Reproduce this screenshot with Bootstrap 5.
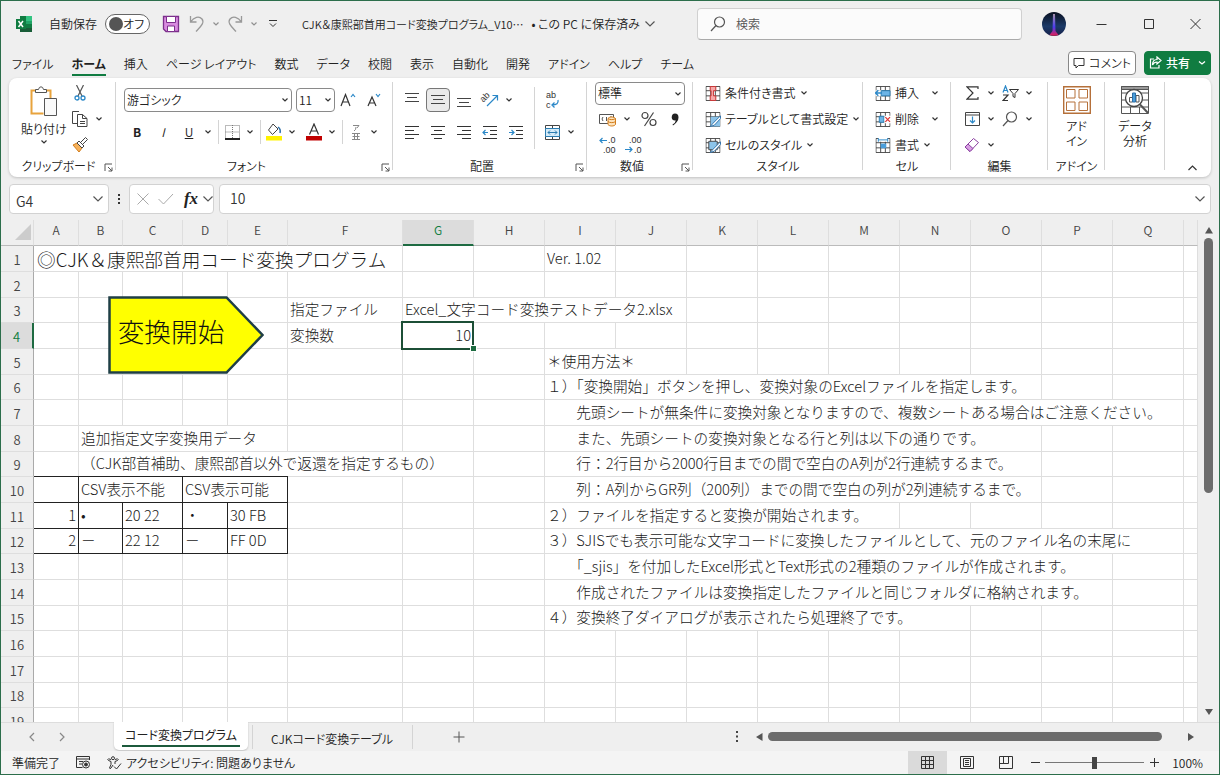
<!DOCTYPE html>
<html lang="ja">
<head>
<meta charset="utf-8">
<meta name="viewport" content="width=device-width, initial-scale=1">
<title>CJK＆康熙部首用コード変換プログラム</title>
<link href="https://cdn.jsdelivr.net/npm/bootstrap@5.3.0/dist/css/bootstrap.min.css" rel="stylesheet">
<style>
:root { --xl: #107c41; --edge: #2c6e4b; --ln: #dedede; --bar: #efefef; }
body { font-family: "Noto Sans CJK JP", sans-serif; font-size: 12px; font-weight: 350; line-height: 16px; color: #222; background: var(--bar); }
.ui { font-feature-settings: "palt"; }
.win { height: 100vh; border: 1px solid var(--edge); overflow: hidden; }
button, select, input { font: inherit; color: inherit; font-feature-settings: inherit; }
.flat { border: 0; background: none; padding: 0; display: inline-flex; align-items: center; justify-content: center; flex: none; }
svg { flex: none; display: block; }
svg text { font-family: "Liberation Sans", sans-serif; font-size: 9px; fill: #333; }
.cv { width: 12px; height: 24px; } .cv-w { width: 20px; }
.ib { width: 26px; height: 24px; } .ib-s { width: 16px; } .ib-m { width: 20px; } .ib-l { width: 32px; }
.titlebar { height: 47px; padding-left: 14px; }
.doctitle { font-size: 11px; margin-left: 16px; }
.toggle { width: 45px; height: 20px; border: 1px solid #666; border-radius: 10px; background: #fff; padding: 0 5px 0 3px; white-space: nowrap; }
.knob { width: 14px; height: 14px; border-radius: 50%; background: #555; flex: none; }
.searchbox { width: 325px; height: 32px; background: #fbfbfb; border: 1px solid #d0d0d0; border-bottom-color: #aaa; border-radius: 4px; padding-left: 12px; }
.searchbox input { border: 0; background: none; outline: 0; width: 240px; }
.searchbox input::placeholder { color: #555; opacity: 1; }
.tabs { height: 32px; padding-left: 11px; }
.tabs a { color: #222; text-decoration: none; height: 25px; padding-top: 5px; white-space: nowrap; margin-right: 18px; }
.tabs a.on { font-weight: 700; border-bottom: 2px solid var(--xl); }
.pill { height: 24px; border: 1px solid #888; border-radius: 4px; background: #fff; gap: 4px; }
.pill.share { background: var(--xl); border-color: var(--xl); color: #fff; font-weight: 500; }
.ribbon { margin: 0 8px; height: 99px; background: #fff; border-radius: 8px; box-shadow: 0 1px 3px #0003; }
.grp { position: relative; height: 99px; flex: none; }
.grp::after { content: ""; position: absolute; right: 0; top: 4px; bottom: 7px; width: 1px; background: #d4d4d4; }
.grp-body { height: 80px; }
.grp-name { height: 16px; line-height: 16px; text-align: center; }
.launch { position: absolute; right: 3px; bottom: 5px; }
.g-clip { width: 107px; } .g-font { width: 277px; } .g-align { width: 194px; } .g-num { width: 106px; }
.g-style { width: 170px; } .g-cell { width: 88px; } .g-edit { width: 97px; } .g-add { width: 57px; } .g-data { width: 60px; }
.two { padding-top: 10px; display: flex; flex-direction: column; gap: 8px; }
.three { padding-top: 2px; }
.three > div { height: 26px; display: flex; align-items: center; }
.bigbtn { flex-direction: column; line-height: 15px; }
.pad6 { padding-left: 6px; }
.sep { width: 1px; height: 24px; background: #d4d4d4; margin: 0 5px 0 6px; }
.vsep { width: 1px; height: 62px; background: #d4d4d4; margin: 9px 4px 0 5px; }
.combo { height: 24px; border: 1px solid #8a8a8a; border-radius: 4px; background: #fff; padding: 0 2px; appearance: none; }
.combo-wrap { position: relative; }
.combo-wrap svg { position: absolute; right: 3px; top: 9px; pointer-events: none; }
.c-font { width: 168px; } .c-size { width: 39px; } .c-num { width: 90px; height: 23px; }
.boxed { border: 1px solid #777; border-radius: 4px; background: #eaeaea; width: 24px; margin: 0 1px; }
.cmd { gap: 4px; white-space: nowrap; }
.fbar { padding: 7px 8px 6px; gap: 5px; }
.fbox { height: 30px; background: #fff; border: 1px solid #d2d2d2; border-radius: 4px; }
.fbox input, .fbox.fx { font-size: 14px; }
.fbox input { border: 0; outline: 0; background: none; min-width: 0; color: #333; }
.c-name { width: 100px; } .c-fx { width: 85px; }
.fxi { font: italic bold 17px "Liberation Serif", serif; color: #222; width: 22px; }
.sheet { flex: 1 1 0; min-height: 0; overflow: hidden; position: relative; }
.grid { table-layout: fixed; width: 100%; border-collapse: separate; border-spacing: 0; background: #fff; font-size: 11pt; line-height: 20px; color: #1a1a1a; font-weight: 300; font-feature-settings: normal; }
.grid td, .grid th { height: 26px; padding: 0 2px; border: 0 solid var(--ln); border-width: 0 1px 1px 0; white-space: pre; vertical-align: middle; overflow: hidden; }
.grid tbody tr:nth-child(3n) > * { height: 25px; }
.grid td { padding-bottom: 2px; }
.grid th { background: var(--bar); font-weight: 350; font-size: 13px; line-height: 16px; color: #444; text-align: center; padding: 0; }
.grid thead th { height: 26px; font-size: 12px; padding-bottom: 5px; border-bottom-color: #bbb; }
.grid tbody th { border-right-color: #aaa; padding-top: 2px; }
.grid th.sel { background: #dcdcdc; color: var(--xl); }
.grid thead th.sel { border-bottom: 2px solid #1e6b42; padding-bottom: 4px; }
.grid tbody th.sel { border-right: 2px solid #1e6b42; }
.grid td.bd { border-color: #222; }
.grid td.bdtop { box-shadow: 0 -1px #222; overflow: visible; }
.grid td.big { font-size: 14pt; line-height: 24px; padding: 0 3px; }
.grid td.num { text-align: right; }
.grid td.cur { position: relative; overflow: visible; }
.cur::before { content: ""; position: absolute; inset: -2px -1px -2px -2px; border: 2px solid #1c4f36; }
.cur::after { content: ""; position: absolute; right: -3px; bottom: -3px; width: 5px; height: 5px; background: #1c6b40; outline: 1px solid #fff; }
.corner { width: 0; height: 0; border: 8px solid transparent; border-right-color: #ccc; border-bottom-color: #ccc; margin: 3px 0 0 14px; }
.startbtn { position: absolute; left: 106px; top: 75px; width: 158px; height: 79px; }
.startbtn svg { position: absolute; inset: 0; }
.startbtn span { position: relative; font-size: 20pt; line-height: 32px; font-weight: 300; color: #111; padding-right: 30px; padding-bottom: 7px; }
.vscroll { width: 21px; padding: 6px 0; }
.vscroll .thumb { width: 9px; flex: 256 0 0; border-radius: 5px; background: #6c6c6c; margin-top: 4px; }
.rest-v { flex: 216 0 0; }
.sheettabs { height: 30px; border-top: 1px solid #ddd; padding-left: 25px; }
.sheettabs .tabon { background: #fff; border-radius: 0 0 5px 5px; height: 28px; width: 134px; box-shadow: 0 1px 2px #0003; margin-top: -2px; }
.tabon span { border-bottom: 2px solid #1c5a3c; padding: 0 3px; line-height: 21px; font-weight: 400; }
.taboff { width: 148px; padding-top: 4px; }
.addtab { margin-left: 35px; }
.hscroll { width: 440px; }
.hscroll .thumb { height: 9px; flex: 394 0 0; border-radius: 5px; background: #6c6c6c; margin: 0 0 0 5px; }
.rest-h { flex: 25 0 0; }
.status { height: 23px; background: #f4f4f4; padding-left: 11px; }
.vw { width: 39px; height: 23px; } .vw.on { background: #dadada; }
.zoomr { appearance: none; width: 99px; height: 14px; background: linear-gradient(#777, #777) center / 100% 1px no-repeat; }
.zoomr::-webkit-slider-thumb { appearance: none; width: 5px; height: 12px; background: #444; border: 0; border-radius: 0; }
.ava { width: 24px; height: 24px; }
</style>
</head>
<body>
<svg width="0" height="0" class="position-absolute" fill="none">
  <symbol id="dn" viewBox="0 0 8 6"><path d="M1.5 1.5 4 4l2.500-2.500" fill="none" stroke="#333" stroke-width="1.200"/></symbol>
  <symbol id="dnl" viewBox="0 0 12 8"><path d="M1.500 1.500 6 6l4.500-4.500" fill="none" stroke="#555" stroke-width="1.200"/></symbol>
  <symbol id="mag" viewBox="0 0 16 16"><g fill="none" stroke="#555" stroke-width="1.200"><circle cx="9.500" cy="6" r="5"/><path d="M6 9.500 1 15"/></g></symbol>
  <symbol id="lau" viewBox="0 0 9 9"><path d="M1 8V1h7M4 4l4 4M8 4.500V8H4.500" fill="none" stroke="#555"/></symbol>
  <symbol id="tbl" viewBox="0 0 16 16"><path d="M.5 .5h15v15H.5zM.5 5h15M.5 10.500h15M5.500 .5v15M10.500 .5v15" fill="none" stroke="#444"/></symbol>
</svg>
<div class="win d-flex flex-column ui">

  <header class="titlebar d-flex align-items-center">
    <svg width="18" height="18" viewBox="0 0 18 18"><path d="M5 1h12v16H5z" fill="#21a366"/><path d="M5 1h6v5H5z" fill="#107c41"/><path d="M11 1h6v5h-6z" fill="#33c481"/><path d="M5 9h12v8H5z" fill="#185c37"/><path d="M11 9h6v4h-6z" fill="#107c41"/><path d="M1 4h10v10H1z" fill="#107c41"/><path d="m3.500 6 4.500 6M8 6l-4.500 6" stroke="#fff" stroke-width="1.500"/></svg>
    <span class="ms-3" id="autosave">自動保存</span>
    <button class="toggle d-flex align-items-center justify-content-between ms-2" role="switch" aria-checked="false" aria-labelledby="autosave"><span class="knob"></span><span>オフ</span></button>
    <button class="flat ms-2 ib" aria-label="上書き保存"><svg width="18" height="18" viewBox="0 0 18 18"><path d="M1.500 1.500h15v15H4l-2.500-2.500z" fill="#d98be0" stroke="#7c2f8c" stroke-width="1.300"/><path d="M4.500 1.500h9v6h-9zM5.500 11h7v5.500h-7z" fill="#fff" stroke="#7c2f8c"/></svg></button>
    <button class="flat ib" aria-label="元に戻す"><svg width="16" height="18" viewBox="0 0 16 18" fill="none" stroke="#999" stroke-width="1.300"><path d="M1.500 1v6h6M1.500 7C5 2 10 .5 13 4c3 4-2 8-6 12.500"/></svg></button>
    <button class="flat cv" aria-label="元に戻す一覧"><svg width="8" height="6" opacity=".5"><use href="#dn"/></svg></button>
    <button class="flat ib" aria-label="やり直し"><svg width="16" height="18" viewBox="0 0 16 18" fill="none" stroke="#999" stroke-width="1.300"><path d="M14.500 1v6h-6M14.500 7C11 2 6 .5 3 4c-3 4 2 8 6 12.500"/></svg></button>
    <button class="flat cv" aria-label="やり直し一覧"><svg width="8" height="6" opacity=".5"><use href="#dn"/></svg></button>
    <button class="flat ib" aria-label="クイック アクセスのカスタマイズ"><svg width="8" height="8" viewBox="0 0 8 8" fill="none" stroke="#333"><path d="M0 .5h8M1 3.500l3 3 3-3"/></svg></button>
    <span class="doctitle text-nowrap">CJK＆康熙部首用コード変換プログラム_V10…</span>
    <button class="flat ms-2 gap-1 text-nowrap">• この PC に保存済み <svg width="12" height="8"><use href="#dnl"/></svg></button>
    <div class="flex-fill"></div>
    <label class="searchbox d-flex align-items-center gap-2"><svg width="16" height="16"><use href="#mag"/></svg><input type="search" placeholder="検索" aria-label="検索"></label>
    <button class="flat ms-3 ps-1" aria-label="アカウント"><svg class="ava" viewBox="0 0 24 24"><defs><linearGradient id="av" x2="0" y2="1"><stop stop-color="#0a1020"/><stop offset=".6" stop-color="#1b3a68"/><stop offset="1" stop-color="#16204a"/></linearGradient><linearGradient id="be" x2="0" y2="1"><stop stop-color="#a58fa8"/><stop offset=".6" stop-color="#4a3cf0"/><stop offset="1" stop-color="#e01c50"/></linearGradient></defs><circle cx="12" cy="12" r="12" fill="url(#av)"/><path d="M11 2h2l.5 17 3 4q-4.500 1.500-9 0l3-4z" fill="url(#be)"/></svg></button>
    <div class="d-flex ms-2 ps-1">
      <button class="flat" aria-label="最小化"><svg width="47" height="12" viewBox="0 0 47 12"><path d="M18.500 6.500h10" stroke="#333"/></svg></button>
      <button class="flat" aria-label="最大化"><svg width="47" height="12" viewBox="0 0 47 12"><path d="M19.500 1.500h9v9h-9z" fill="none" stroke="#333"/></svg></button>
      <button class="flat" aria-label="閉じる"><svg width="47" height="12" viewBox="0 0 47 12"><path d="m18.500 1 10 10m0-10-10 10" stroke="#333"/></svg></button>
    </div>
  </header>

  <nav class="tabs d-flex align-items-start pt-1">
    <a href="#">ファイル</a><a href="#" class="on">ホーム</a><a href="#">挿入</a><a href="#">ページ レイアウト</a><a href="#">数式</a><a href="#">データ</a><a href="#">校閲</a><a href="#">表示</a><a href="#">自動化</a><a href="#">開発</a><a href="#">アドイン</a><a href="#">ヘルプ</a><a href="#">チーム</a>
    <button class="pill flat ms-auto px-1"><svg width="12" height="12" viewBox="0 0 12 12"><path d="M1 1.500h10v7H5.500L3 11V8.500H1z" fill="none" stroke="#333"/></svg>コメント</button>
    <button class="pill share flat ms-2 me-2 px-1"><svg width="13" height="13" viewBox="0 0 13 13" fill="none" stroke="#fff" stroke-width="1.200"><path d="M5 3H1.500v9H10V9M8 1l4 3.500L8 8V6C5.500 6 4.500 7 3.500 9c0-3 1.500-5.500 4.500-5.500z"/></svg>共有<svg class="ms-1" width="8" height="6" viewBox="0 0 8 6"><path d="M1 1.500 4 4l3-2.500" fill="none" stroke="#fff" stroke-width="1.300"/></svg></button>
  </nav>

  <section class="ribbon d-flex">
    <div class="grp g-clip">
      <div class="grp-body d-flex">
        <button class="flat bigbtn ms-2 ps-1 mt-2 align-self-start"><svg width="28" height="31" viewBox="0 0 28 31"><path d="M5.500 4.500h-4v23h12" fill="none" stroke="#e8a33d" stroke-width="2"/><path d="M16.500 4.500h4V12" fill="none" stroke="#e8a33d" stroke-width="2"/><path d="M5.500 6.500v-3h3Q9 .8 11 .8t2.500 2.700h3v3z" fill="#fff" stroke="#555"/><path d="M14.500 12.500h12v17h-12z" fill="#fafafa" stroke="#555"/></svg><span class="mt-1">貼り付け</span><svg width="8" height="12"><use href="#dn" y="3" width="8" height="6"/></svg></button>
        <div class="three">
          <div><button class="flat ib" aria-label="切り取り"><svg width="12" height="16" viewBox="0 0 12 16" fill="none"><path d="M2.500 0 8 11M9.500 0 4 11" stroke="#555" stroke-width="1.200"/><circle cx="3" cy="13" r="2" stroke="#2b88c8" stroke-width="1.300"/><circle cx="9" cy="13" r="2" stroke="#2b88c8" stroke-width="1.300"/></svg></button></div>
          <div><button class="flat ib" aria-label="コピー"><svg width="16" height="16" viewBox="0 0 16 16" fill="#fff" stroke="#444"><path d="M6 12.500H.5V.5H7"/><path d="M5.500 3.500h5l4.500 4v8H5.500zM10.500 3.500v4H15M8 10.500h5M8 12.500h5"/></svg></button><button class="flat cv" aria-label="コピーのオプション"><svg width="8" height="6"><use href="#dn"/></svg></button></div>
          <div><button class="flat ib" aria-label="書式のコピー"><svg width="16" height="16" viewBox="0 0 16 16"><path d="m1 8 4-2 5 5-3 4z" fill="#f6b25c" stroke="#d27d1c"/><path d="m5 6 2-2 5 5-2 2zM9 5l4.500-4.500 2 2L11 7" fill="#fff" stroke="#444"/></svg></button></div>
        </div>
      </div>
      <div class="grp-name pe-2">クリップボード</div>
      <button class="flat launch" aria-label="クリップボードの設定"><svg width="9" height="9"><use href="#lau"/></svg></button>
    </div>

    <div class="grp g-font">
      <div class="grp-body two ps-2">
        <div class="d-flex align-items-center">
          <div class="combo-wrap"><select class="combo c-font" aria-label="フォント"><option>游ゴシック</option></select><svg width="8" height="6"><use href="#dn"/></svg></div>
          <div class="combo-wrap ms-1"><select class="combo c-size" aria-label="フォント サイズ"><option>11</option></select><svg width="8" height="6"><use href="#dn"/></svg></div>
          <button class="flat ib" aria-label="フォント サイズの拡大"><svg width="16" height="14" viewBox="0 0 16 14" fill="none"><path d="M1 13 5.500 1.500 10 13M2.500 9h6" stroke="#333" stroke-width="1.200"/><path d="m11 4 2-2.500L15 4" stroke="#2b88c8" stroke-width="1.200"/></svg></button>
          <button class="flat ib" aria-label="フォント サイズの縮小"><svg width="16" height="14" viewBox="0 0 16 14" fill="none"><path d="M2 13 6 4l4 9M3.500 10h5" stroke="#333" stroke-width="1.200"/><path d="m10 1 2 2.500L14 1" stroke="#2b88c8" stroke-width="1.200"/></svg></button>
        </div>
        <div class="d-flex align-items-center">
          <button class="flat ib fw-bold">B</button><button class="flat ib fst-italic">I</button><button class="flat ib text-decoration-underline">U</button><button class="flat cv" aria-label="下線の種類"><svg width="8" height="6"><use href="#dn"/></svg></button>
          <span class="sep ms-1"></span>
          <button class="flat ib-s" aria-label="罫線"><svg width="15" height="15" viewBox="0 0 15 15"><path d="M.5 .5h14v13H.5zM.5 7h14M7.500 0v14" fill="none" stroke="#777" stroke-dasharray="1 1"/><path d="M0 14h15" stroke="#222" stroke-width="2"/></svg></button><button class="flat cv cv-w" aria-label="罫線の種類"><svg width="8" height="6"><use href="#dn"/></svg></button>
          <span class="sep ms-0"></span>
          <button class="flat ib-s" aria-label="塗りつぶしの色"><svg width="16" height="18" viewBox="0 0 16 18"><path d="M0 13h16v4.500H0z" fill="#fff200"/><path d="m7 1 5 5-5.500 5.500-4-4.500z" fill="#fff" stroke="#444"/><path d="M12 4q3 2 2 6" fill="none" stroke="#2b6ea8" stroke-width="1.500"/></svg></button><button class="flat cv cv-w" aria-label="塗りつぶしの色一覧"><svg width="8" height="6"><use href="#dn"/></svg></button>
          <button class="flat ib-s ms-1" aria-label="フォントの色"><svg width="16" height="18" viewBox="0 0 16 18"><path d="M0 13h16v4.500H0z" fill="#c00000"/><path d="M3.500 11.500 8 1l4.500 10.500M5 8h6" fill="none" stroke="#333" stroke-width="1.200"/></svg></button><button class="flat cv cv-w" aria-label="フォントの色一覧"><svg width="8" height="6"><use href="#dn"/></svg></button>
          <span class="sep ms-0"></span>
          <button class="flat ib-s" aria-label="ふりがな"><svg width="10" height="17" viewBox="0 0 10 17" fill="none" stroke="#888"><path d="M2 1.500h6L6 4M5 3q0 3-2 4M1 9.500h8M1 15.500h8M3.500 9.500v6M6.500 9.500v6M1.500 12.500h7"/></svg></button><button class="flat cv cv-w" aria-label="ふりがなの設定"><svg width="8" height="6"><use href="#dn"/></svg></button>
        </div>
      </div>
      <div class="grp-name pe-3">フォント</div>
      <button class="flat launch" aria-label="フォントの設定"><svg width="9" height="9"><use href="#lau"/></svg></button>
    </div>

    <div class="grp g-align">
      <div class="grp-body d-flex pad6">
        <div class="two">
          <div class="d-flex">
            <button class="flat ib" aria-label="上揃え"><svg width="16" height="16" viewBox="0 0 16 16"><path d="M1 1.500h14M3 5.500h10M1 9.500h14" stroke="#444"/></svg></button>
            <button class="flat ib boxed" aria-label="上下中央揃え"><svg width="16" height="16" viewBox="0 0 16 16"><path d="M1 3.500h14M3 7.500h10M1 11.500h14" stroke="#444"/></svg></button>
            <button class="flat ib" aria-label="下揃え"><svg width="16" height="16" viewBox="0 0 16 16"><path d="M1 6.500h14M3 10.500h10M1 14.500h14" stroke="#444"/></svg></button>
            <button class="flat ib" aria-label="方向"><svg width="20" height="20" viewBox="0 0 20 20"><path d="M7 16 17 6M12.500 5.500h5v5" fill="none" stroke="#2b88c8" stroke-width="1.200"/><text x="3" y="12" transform="rotate(-45 4 12)">ab</text></svg></button><button class="flat cv" aria-label="方向一覧"><svg width="8" height="6"><use href="#dn"/></svg></button>
          </div>
          <div class="d-flex">
            <button class="flat ib" aria-label="左揃え"><svg width="16" height="14" viewBox="0 0 16 14"><path d="M1 1.500h14M1 5.500h9M1 9.500h14M1 13.500h9" stroke="#333"/></svg></button>
            <button class="flat ib" aria-label="中央揃え"><svg width="16" height="14" viewBox="0 0 16 14"><path d="M1 1.500h14M4 5.500h8M1 9.500h14M4 13.500h8" stroke="#333"/></svg></button>
            <button class="flat ib" aria-label="右揃え"><svg width="16" height="14" viewBox="0 0 16 14"><path d="M1 1.500h14M6 5.500h9M1 9.500h14M6 13.500h9" stroke="#333"/></svg></button>
            <button class="flat ib" aria-label="インデントを減らす"><svg width="16" height="14" viewBox="0 0 16 14" fill="none"><path d="M1 1.500h14M8 5.500h7M8 9.500h7M1 13.500h14" stroke="#333"/><path d="M6 7.500H1M3.500 5 1 7.500 3.500 10" stroke="#2b88c8" stroke-width="1.200"/></svg></button>
            <button class="flat ib" aria-label="インデントを増やす"><svg width="16" height="14" viewBox="0 0 16 14" fill="none"><path d="M1 1.500h14M8 5.500h7M8 9.500h7M1 13.500h14" stroke="#333"/><path d="M1 7.500h5M3.500 5 6 7.500 3.500 10" stroke="#2b88c8" stroke-width="1.200"/></svg></button>
          </div>
        </div>
        <span class="vsep"></span>
        <div class="two">
          <button class="flat ib" aria-label="折り返して全体を表示する"><svg width="16" height="22" viewBox="0 0 16 22"><text x="2" y="9">ab</text><text x="2" y="19">c</text><path d="M14 11q1 5-6 5M10.500 13.500 8 16l2.500 2.500" fill="none" stroke="#2b88c8" stroke-width="1.300"/></svg></button>
          <div class="d-flex"><button class="flat ib" aria-label="セルを結合して中央揃え"><svg width="15" height="15" viewBox="0 0 15 15" fill="none"><path d="M.5 .5h14v14H.5z" stroke="#444" fill="#fff"/><path d="M7.500 0v15" stroke="#444"/><path d="M.5 3.500h14v8H.5z" fill="#d5ebf8" stroke="#2b7cb0"/><path d="M3 7.500h9M5 5.500l-2 2 2 2M10 5.500l2 2-2 2" stroke="#2b7cb0"/></svg></button><button class="flat cv" aria-label="結合の種類"><svg width="8" height="6"><use href="#dn"/></svg></button></div>
        </div>
      </div>
      <div class="grp-name pe-3">配置</div>
      <button class="flat launch" aria-label="配置の設定"><svg width="9" height="9"><use href="#lau"/></svg></button>
    </div>

    <div class="grp g-num">
      <div class="grp-body three ps-2">
        <div><div class="combo-wrap"><select class="combo c-num" aria-label="表示形式"><option>標準</option></select><svg width="8" height="6"><use href="#dn"/></svg></div></div>
        <div><button class="flat ib" aria-label="通貨表示形式"><svg width="18" height="15" viewBox="0 0 18 15"><path d="M.5 2.500h14v9H.5z" fill="#fff" stroke="#555"/><path d="M4 5q-2 2 0 4M7.500 5v4M11 5h2" fill="none" stroke="#555"/><path d="M9 6.500v6c1.500 2 6 2 7.500 0v-6c-1.500-2-6-2-7.500 0m0 0c1.500 1.500 6 1.500 7.500 0M9 9.500c1.500 1.500 6 1.500 7.500 0" fill="#fde3bd" stroke="#d27d1c"/></svg></button><button class="flat cv" aria-label="通貨一覧"><svg width="8" height="6"><use href="#dn"/></svg></button><button class="flat ib-l" aria-label="パーセント スタイル"><svg width="16" height="16" viewBox="0 0 16 16" fill="none" stroke="#444" stroke-width="1.200"><circle cx="4" cy="4.500" r="3"/><circle cx="12" cy="11.500" r="3"/><path d="M12.500 1.500 3.500 15"/></svg></button><button class="flat ib-m" aria-label="桁区切りスタイル"><svg width="8" height="13" viewBox="0 0 8 13"><path d="M4 .5q3.500 0 3.500 4T2 12.500l-.5-1Q4.500 10 4.800 7.500 1 8 .7 4.500.8.5 4 .5z" fill="#222"/></svg></button></div>
        <div><button class="flat ib" aria-label="小数点以下の表示桁数を増やす"><svg width="18" height="22" viewBox="0 0 18 22"><path d="M8 6.500H1M3.500 4 1 6.500 3.500 9" fill="none" stroke="#2b88c8" stroke-width="1.200"/><text x="9" y="9">.0</text><text x="4" y="19">.00</text></svg></button><button class="flat ib" aria-label="小数点以下の表示桁数を減らす"><svg width="18" height="22" viewBox="0 0 18 22"><path d="M0 15.500h7M4.500 13 7 15.500 4.500 18" fill="none" stroke="#2b88c8" stroke-width="1.200"/><text x="4" y="9">.00</text><text x="9" y="19">.0</text></svg></button></div>
      </div>
      <div class="grp-name pe-3">数値</div>
      <button class="flat launch" aria-label="数値の設定"><svg width="9" height="9"><use href="#lau"/></svg></button>
    </div>

    <div class="grp g-style">
      <div class="grp-body three ps-2 ms-1">
        <div><button class="flat cmd"><svg width="16" height="15" viewBox="0 0 16 16"><use href="#tbl" width="16" height="16"/><path d="M5 .5h6V5H8.500v5.500H11v5H5v-5h1V5H5z" fill="#f7a8a8" stroke="#c33"/></svg>条件付き書式<svg width="8" height="6"><use href="#dn"/></svg></button></div>
        <div><button class="flat cmd"><svg width="16" height="15" viewBox="0 0 16 16"><use href="#tbl" width="16" height="16"/><path d="M5.500 5h10v10.500h-10z" fill="#8cc4ea"/><path d="m16 4-8 8-3 3.500 4.500-1.500L16 7z" fill="#fff" stroke="#2b6ea8"/></svg>テーブルとして書式設定<svg width="8" height="6"><use href="#dn"/></svg></button></div>
        <div><button class="flat cmd"><svg width="16" height="15" viewBox="0 0 16 16"><use href="#tbl" width="16" height="16"/><path d="M3.500 3.500h9v9h-9z" fill="#8cc4ea" stroke="#444"/><path d="m16 4-8 8-3 3.500 4.500-1.500L16 7z" fill="#fff" stroke="#2b6ea8"/></svg>セルのスタイル<svg width="8" height="6"><use href="#dn"/></svg></button></div>
      </div>
      <div class="grp-name">スタイル</div>
    </div>

    <div class="grp g-cell">
      <div class="grp-body three ps-2 ms-1">
        <div><button class="flat cmd"><svg width="16" height="15" viewBox="0 0 16 16"><use href="#tbl" width="16" height="16"/><path d="M0 4.500h7v6.500H0z" fill="#fff"/><path d="M6 5h9.500v5.500H6z" fill="#6cb4e6" stroke="#2b7cb0"/><path d="M7 7.500H0M3 4.500l-3 3 3 3" fill="none" stroke="#2b88c8" stroke-width="1.500"/></svg>挿入<svg class="ms-2" width="8" height="6"><use href="#dn"/></svg></button></div>
        <div><button class="flat cmd"><svg width="16" height="15" viewBox="0 0 16 16"><use href="#tbl" width="16" height="16"/><path d="M4 4.500h5v6.500H4z" fill="#6cb4e6" stroke="#2b7cb0"/><path d="M9.500 4h7v8h-7z" fill="#fff"/><path d="m10.500 5.500 5 5m0-5-5 5" stroke="#d33" stroke-width="1.300"/></svg>削除<svg class="ms-2" width="8" height="6"><use href="#dn"/></svg></button></div>
        <div><button class="flat cmd"><svg width="16" height="15" viewBox="0 0 16 16"><use href="#tbl" width="16" height="16"/><path d="M3 0h10v4H3z" fill="#fff"/><path d="M3 2h10M3 0v4M13 0v4" stroke="#2b88c8"/><path d="M5.500 6h6v5h-6z" fill="#4a9edb"/></svg>書式<svg width="8" height="6"><use href="#dn"/></svg></button></div>
      </div>
      <div class="grp-name">セル</div>
    </div>

    <div class="grp g-edit">
      <div class="grp-body three ps-2">
        <div><button class="flat ib" aria-label="合計"><svg width="13" height="14" viewBox="0 0 13 14"><path d="M12 3V.8H1L7 7l-6 6.200h11V11" fill="none" stroke="#333" stroke-width="1.200"/></svg></button><button class="flat cv" aria-label="合計一覧"><svg width="8" height="6"><use href="#dn"/></svg></button>
          <button class="flat ib" aria-label="並べ替えとフィルター"><svg width="17" height="17" viewBox="0 0 17 17" fill="none"><path d="M1 7.500 3.500 1 6 7.500M2 5.500h3" stroke="#2b88c8" stroke-width="1.200"/><path d="M1 10h5L1 15.500h5" stroke="#333" stroke-width="1.200"/><path d="M7.500 4.500h9l-3.500 4v4l-2 -1v-3z" stroke="#333"/></svg></button><button class="flat cv" aria-label="並べ替え一覧"><svg width="8" height="6"><use href="#dn"/></svg></button></div>
        <div><button class="flat ib" aria-label="フィル"><svg width="15" height="14" viewBox="0 0 15 14" fill="none"><path d="M.5 .5h14v13H.5zM.5 3h14" stroke="#444"/><path d="M7.500 4.500V11M5 8.500 7.500 11 10 8.500" stroke="#2b88c8" stroke-width="1.200"/></svg></button><button class="flat cv" aria-label="フィル一覧"><svg width="8" height="6"><use href="#dn"/></svg></button>
          <button class="flat ib" aria-label="検索と選択"><svg width="16" height="16"><use href="#mag"/></svg></button><button class="flat cv" aria-label="検索一覧"><svg width="8" height="6"><use href="#dn"/></svg></button></div>
        <div><button class="flat ib" aria-label="クリア"><svg width="16" height="16" viewBox="0 0 16 16"><path d="m1 10 8.500-8.500 5 4L6 14.500z" fill="#fff" stroke="#8a3fa0"/><path d="m1 10 3-3 5 4.500-3 3z" fill="#d9a0e4" stroke="#8a3fa0"/></svg></button><button class="flat cv" aria-label="クリア一覧"><svg width="8" height="6"><use href="#dn"/></svg></button></div>
      </div>
      <div class="grp-name">編集</div>
    </div>

    <div class="grp g-add">
      <div class="grp-body d-flex justify-content-center"><button class="flat bigbtn align-self-start mt-2"><svg width="28" height="28" viewBox="0 0 28 28" fill="none" stroke="#b5703a"><path d="M.7 .7h26.600v26.600H.7z" stroke-width="1.400"/><path d="M3.500 3.500h8.500v8.500H3.500zM16 3.500h8.500v8.500H16zM3.500 16h8.500v8.500H3.500zM16 16h8.500v8.500H16z"/></svg><span class="mt-1">アド<br>イン</span></button></div>
      <div class="grp-name">アドイン</div>
    </div>

    <div class="grp g-data">
      <div class="grp-body d-flex justify-content-center"><button class="flat bigbtn align-self-start mt-2"><svg width="28" height="28" viewBox="0 0 28 28" fill="none" stroke="#555"><path d="M.5 .5h27v27H.5zM.5 7h27M.5 14h27M.5 21h27M9.500 21v7M18.500 21v7"/><path d="M.5 .5h27v3H.5z" fill="#999"/><circle cx="13" cy="12" r="8.500" fill="#fff" stroke="#444" stroke-width="1.300"/><path d="m19 18.500 8 8.500" stroke-width="2"/><path d="M8.500 11.500h3V16h-3zM15 9.500h3V16h-3z" fill="#fff"/><path d="M11.500 7h3v9h-3z" fill="#4a9edb" stroke="#2b6ea8"/></svg><span class="mt-1">データ<br>分析</span></button></div>
    </div>
    <button class="flat ms-auto align-self-end me-2 p-1" aria-label="リボンを折りたたむ"><svg width="12" height="10" viewBox="0 0 12 10"><path d="m1.500 7 4-4 4 4" fill="none" stroke="#333" stroke-width="1.200"/></svg></button>
  </section>

  <div class="fbar d-flex align-items-center">
    <div class="fbox c-name d-flex align-items-center px-1"><input class="flex-fill w-50 pt-1" value="G4" aria-label="名前ボックス"><svg width="12" height="8"><use href="#dnl"/></svg></div>
    <svg width="10" height="14" viewBox="0 0 10 14"><path d="M5 2v2M5 6v2M5 10v2" stroke="#333" stroke-width="2"/></svg>
    <div class="fbox fx c-fx d-flex align-items-center">
      <button class="flat ib" aria-label="キャンセル"><svg width="12" height="12" viewBox="0 0 12 12"><path d="m.5 .5 11 11m0-11-11 11" stroke="#aaa"/></svg></button><button class="flat ib-m" aria-label="入力"><svg width="16" height="12" viewBox="0 0 16 12"><path d="m.5 6 5 5L15 1" fill="none" stroke="#aaa"/></svg></button><button class="flat fxi ms-1" aria-label="関数の挿入">fx</button><button class="flat cv" aria-label="関数一覧"><svg width="12" height="8"><use href="#dnl"/></svg></button>
    </div>
    <div class="fbox flex-fill d-flex align-items-center ps-2 pe-1"><input class="flex-fill pb-1" value="10" aria-label="数式バー"><svg width="12" height="8"><use href="#dnl"/></svg></div>
  </div>

  <main class="d-flex flex-fill sheet">
    <div class="sheet h-100">
      <table class="grid" id="grid"></table>
      <button class="flat startbtn"><svg width="158" height="79" viewBox="0 0 158 79"><path d="M2.500 2.500h117l36 37.500-36 37.500H2.500z" fill="#ff0" stroke="#1f3f46" stroke-width="2.500"/></svg><span>変換開始</span></button>
    </div>
    <div class="vscroll d-flex flex-column align-items-center">
      <svg width="10" height="8" viewBox="0 0 10 8"><path d="m5 1 4 6.500H1z" fill="#555"/></svg>
      <div class="thumb"></div><div class="rest-v"></div>
      <svg width="10" height="8" viewBox="0 0 10 8"><path d="m5 7 4-6H1z" fill="#555"/></svg>
    </div>
  </main>

  <div class="sheettabs d-flex align-items-center">
    <button class="flat cv" aria-label="前のシート"><svg width="8" height="10" viewBox="0 0 8 10"><path d="M6 1 2 5l4 4" fill="none" stroke="#888" stroke-width="1.200"/></svg></button>
    <button class="flat cv ms-3 me-5 ps-1" aria-label="次のシート"><svg width="8" height="10" viewBox="0 0 8 10"><path d="m2 1 4 4-4 4" fill="none" stroke="#888" stroke-width="1.200"/></svg></button>
    <button class="flat tabon"><span>コード変換プログラム</span></button>
    <span class="sep ms-1"></span>
    <button class="flat taboff">CJKコード変換テーブル</button>
    <span class="sep"></span>
    <button class="flat addtab me-auto" aria-label="新しいシート"><svg width="12" height="12" viewBox="0 0 12 12"><path d="M6 .5v11M.5 6h11" stroke="#555"/></svg></button>
    <svg class="me-3" width="4" height="13" viewBox="0 0 4 13"><path d="M2 1v2M2 5.500v2M2 10v2" stroke="#444" stroke-width="2"/></svg>
    <div class="hscroll d-flex align-items-center me-4">
      <svg width="8" height="10" viewBox="0 0 8 10"><path d="m1 5 6.500-4v8z" fill="#555"/></svg>
      <div class="thumb"></div><div class="rest-h"></div>
      <svg width="8" height="10" viewBox="0 0 8 10"><path d="m7 5-6-4v8z" fill="#555"/></svg>
    </div>
  </div>

  <footer class="status d-flex align-items-center">
    <span>準備完了</span>
    <svg class="ms-3 me-3" width="15" height="13" viewBox="0 0 15 13" fill="none" stroke="#333"><path d="M13.500 4V.5H.5v11h6M.5 3h13M3 5.500h4M3 8h3"/><circle cx="10" cy="8.500" r="3.500" fill="#f4f4f4"/><circle cx="10" cy="8.500" r="1.500" fill="#333"/></svg>
    <svg class="me-1" width="15" height="14" viewBox="0 0 15 14" fill="none" stroke="#333"><circle cx="6" cy="2.200" r="1.500"/><path d="M4 3.500 1.500 2.800Q0 3.500 1.500 4.500L4 5.500v3L2.500 12q.5 1.500 1.500 0L6 9M8 3.500l2.500-.7q1.500.7 0 1.700L8 5.500V8M7 10.500l2.500 2.500L14 7.500"/></svg>
    <span class="me-auto">アクセシビリティ: 問題ありません</span>
    <button class="flat vw on" aria-label="標準"><svg width="13" height="13" viewBox="0 0 13 13"><path d="M.5 .5h12v12H.5zM.5 4.500h12M.5 8.500h12M4.500 .5v12M8.500 .5v12" fill="none" stroke="#333"/></svg></button>
    <button class="flat vw" aria-label="ページ レイアウト"><svg width="14" height="13" viewBox="0 0 14 13"><path d="M.5 .5h13v12H.5zM3.500 2.500h7v8h-7zM5 4.500h4M5 6.500h4M5 8.500h4" fill="none" stroke="#333"/></svg></button>
    <button class="flat vw" aria-label="改ページ プレビュー"><svg width="14" height="13" viewBox="0 0 14 13"><path d="M.5 .5h13v12H.5zM.5 7.500h9v-7M4.500 .5v7" fill="none" stroke="#333"/></svg></button>
    <button class="flat ib-m" aria-label="縮小"><svg width="9" height="9" viewBox="0 0 9 9"><path d="M0 4.500h9" stroke="#333"/></svg></button>
    <input class="zoomr" type="range" min="0" max="100" value="50" aria-label="ズーム">
    <button class="flat ib-m" aria-label="拡大"><svg width="9" height="9" viewBox="0 0 9 9"><path d="M0 4.500h9M4.500 0v9" stroke="#333"/></svg></button>
    <span class="ms-2 me-3">100%</span>
  </footer>
</div>

<script>
const widths = [33, 45, 44, 60, 45, 60, 115, 71, 71, 71, 71, 71, 71, 71, 71, 71, 71, 71];
const letters = "ABCDEFGHIJKLMNOPQ";
// cell address -> [text, columns it covers, classes]
const cells = {
  A1: ["◎CJK＆康熙部首用コード変換プログラム", 6, "big"], I1: ["Ver. 1.02"],
  F3: ["指定ファイル"], G3: ["Excel_文字コード変換テストデータ2.xlsx", 4],
  F4: ["変換数"], G4: ["10", 1, "num cur"],
  I5: ["＊使用方法＊", 2],
  I6: ["１）「変換開始」ボタンを押し、変換対象のExcelファイルを指定します。", 7],
  I7: ["　　先頭シートが無条件に変換対象となりますので、複数シートある場合はご注意ください。", 9],
  B8: ["追加指定文字変換用データ", 4],
  I8: ["　　また、先頭シートの変換対象となる行と列は以下の通りです。", 7],
  B9: ["（CJK部首補助、康熙部首以外で返還を指定するもの）", 6],
  I9: ["　　行：2行目から2000行目までの間で空白のA列が2行連続するまで。", 7],
  A10: ["", 1, "bd bdtop"], B10: ["CSV表示不能", 2, "bd bdtop"], D10: ["CSV表示可能", 2, "bd bdtop"],
  I10: ["　　列：A列からGR列（200列）までの間で空白の列が2列連続するまで。", 7],
  A11: ["1", 1, "bd num"], B11: ["•", 1, "bd"], C11: ["20 22", 1, "bd"], D11: ["・", 1, "bd"], E11: ["30 FB", 1, "bd"],
  I11: ["２）ファイルを指定すると変換が開始されます。", 5],
  A12: ["2", 1, "bd num"], B12: ["－", 1, "bd"], C12: ["22 12", 1, "bd"], D12: ["－", 1, "bd"], E12: ["FF 0D", 1, "bd"],
  I12: ["３）SJISでも表示可能な文字コードに変換したファイルとして、元のファイル名の末尾に", 9],
  I13: ["　　「_sjis」を付加したExcel形式とText形式の2種類のファイルが作成されます。", 8],
  I14: ["　　作成されたファイルは変換指定したファイルと同じフォルダに格納されます。", 8],
  I15: ["４）変換終了ダイアログが表示されたら処理終了です。", 6]
};
let html = "<colgroup>" + widths.map(w => `<col style="width:${w}px">`).join("") + "<col></colgroup>";
html += '<thead><tr><th aria-label="すべて選択"><div class="corner"></div></th>' + [...letters].map(c => `<th scope="col"${c === "G" ? ' class="sel"' : ""}>${c}</th>`).join("") + "<th></th></tr></thead><tbody>";
for (let r = 1; r <= 19; r++) {
  html += `<tr><th scope="row"${r === 4 ? ' class="sel"' : ""}>${r}</th>`;
  for (let c = 0; c < 18; c++) {
    const d = cells[letters[c] + r] || [""];
    html += `<td colspan="${d[1] || 1}" class="${d[2] || ""}">${d[0]}</td>`;
    c += (d[1] || 1) - 1;
  }
  html += "</tr>";
}
document.getElementById("grid").innerHTML = html + "</tbody>";
</script>
<script src="https://cdn.jsdelivr.net/npm/bootstrap@5.3.0/dist/js/bootstrap.bundle.min.js"></script>
</body>
</html>
